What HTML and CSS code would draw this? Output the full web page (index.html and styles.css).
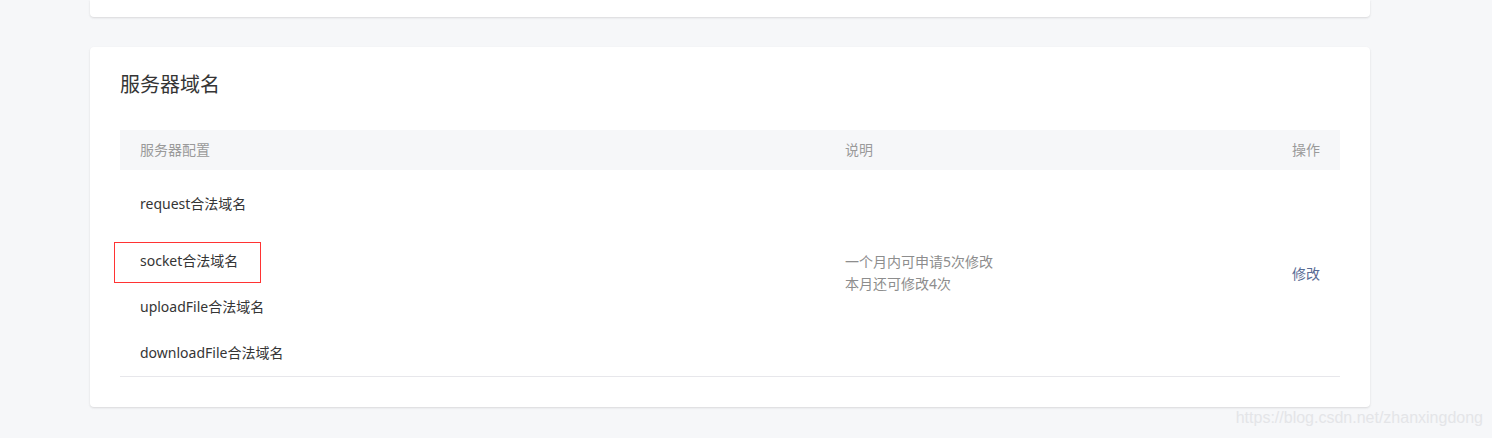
FILE: index.html
```html
<!DOCTYPE html>
<html lang="zh-CN">
<head>
    <meta charset="UTF-8">
    <meta name="viewport" content="width=device-width, initial-scale=1.0">
    <title>服务器域名</title>
    <link rel="stylesheet" href="styles.css">
</head>
<body>
    <div class="page">
        <div class="card card_top"></div>

        <div class="card card_domain">
            <h3 class="card_title">服务器域名</h3>

            <div class="domain_table">
                <div class="th">服务器配置</div>
                <div class="th">说明</div>
                <div class="th th_op">操作</div>

                <div class="td td_list">
                    <div class="item item_tall">
                        <span class="label">request合法域名</span>
                        <div class="values">
                            <span class="value"></span>
                            <span class="value"></span>
                        </div>
                    </div>
                    <div class="item">
                        <!-- красная рамка-пометка поверх строки -->
                        <div class="mark"></div>
                        <span class="label">socket合法域名</span>
                        <div class="values"><span class="value"></span></div>
                    </div>
                    <div class="item">
                        <span class="label">uploadFile合法域名</span>
                        <div class="values"><span class="value"></span></div>
                    </div>
                    <div class="item">
                        <span class="label">downloadFile合法域名</span>
                        <div class="values"><span class="value"></span></div>
                    </div>
                </div>
                <div class="td td_desc">
                    <p>一个月内可申请5次修改</p>
                    <p>本月还可修改4次</p>
                </div>
                <div class="td td_op">
                    <a href="#" class="link">修改</a>
                </div>
            </div>
        </div>
    </div>

    <div class="watermark">https://blog.csdn.net/zhanxingdong</div>
</body>
</html>
```

FILE: styles.css
```css
body {
    margin: 0;
    background-color: #f6f7f9;
    font-family: "Noto Sans", "Noto Sans CJK SC", sans-serif;
    color: #353535;
    height: 438px;
    overflow: hidden;
}

.page {
    width: 1280px;
    margin-left: 90px;
}

.card {
    background-color: #fff;
    border-radius: 4px;
    box-shadow: 0 1px 2px rgba(150, 150, 150, 0.3);
}

.card_top {
    height: 17px;
    border-radius: 0 0 4px 4px;
}

.card_domain {
    margin-top: 30px;
    padding: 24px 30px 30px 30px;
}

.card_title {
    margin: 0;
    font-size: 20px;
    font-weight: normal;
    line-height: 28px;
    color: #353535;
}

.domain_table {
    margin-top: 31px;
    display: grid;
    grid-template-columns: 705px 1fr 120px;
    border-bottom: 1px solid #e7e7eb;
    font-size: 14px;
}

.th {
    background-color: #f6f7f9;
    height: 40px;
    line-height: 40px;
    padding: 0 20px;
    color: #9a9a9a;
}

.th_op {
    text-align: right;
}

.td {
    padding: 0 20px;
}

.item {
    position: relative;
    display: flex;
    align-items: center;
    height: 46px;
    line-height: 22px;
}

.item_tall {
    height: 68px;
}

.label {
    width: 280px;
}

.values {
    display: flex;
    flex-direction: column;
}

.value {
    display: block;
    height: 22px;
}

.mark {
    position: absolute;
    left: -26px;
    top: 4px;
    width: 147px;
    height: 41px;
    box-sizing: border-box;
    border: 1px solid #f33;
}

.td_desc {
    display: flex;
    flex-direction: column;
    justify-content: center;
    color: #8d8d8d;
}

.td_desc p {
    margin: 0;
    line-height: 22px;
}

.td_op {
    display: flex;
    align-items: center;
    justify-content: flex-end;
}

.link {
    color: #576b95;
    text-decoration: none;
}

.watermark {
    position: absolute;
    right: 9px;
    top: 409px;
    font-family: "Liberation Sans", Arial, sans-serif;
    font-size: 16px;
    color: #e4e5e8;
}
```
